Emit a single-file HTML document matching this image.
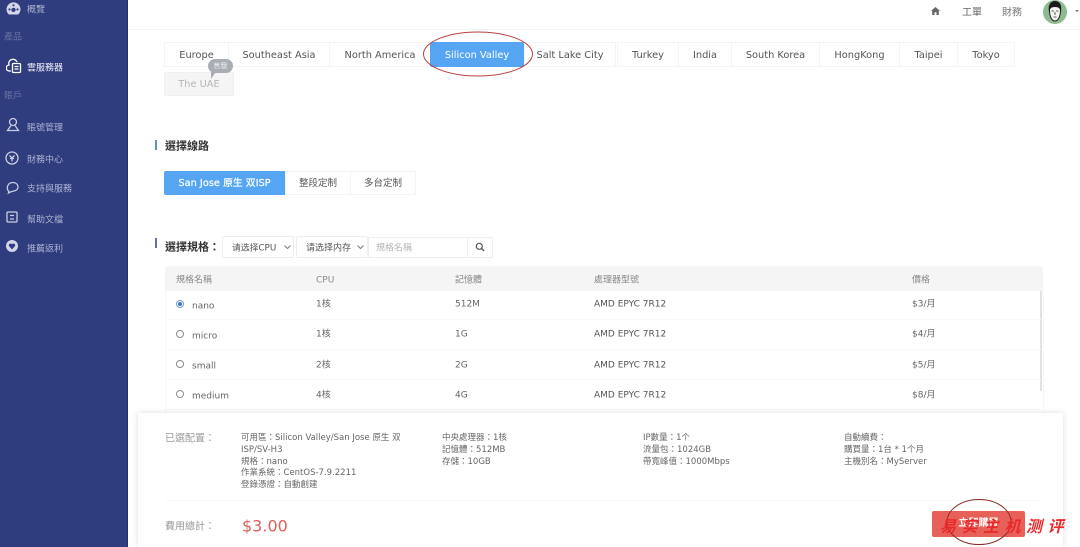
<!DOCTYPE html>
<html lang="zh-Hant">
<head>
<meta charset="utf-8">
<style>
html,body{margin:0;padding:0;width:1080px;height:547px;overflow:hidden;background:#fff}
body{position:relative;font-family:"DejaVu Sans","Noto Sans CJK TC",sans-serif;font-size:9px;color:#666}
.a,.t,.tab{position:absolute;white-space:nowrap}
.t{line-height:12px;transform:translateY(-4.5px)}
#side{position:absolute;left:0;top:0;width:127px;height:547px;background:#2f3c7e;border-right:1px solid #263266}
.nav{color:#aeb4d2;font-size:9px}
.grp{color:#6a74a6;font-size:9px}
.ic{position:absolute;left:5px;width:16px;height:16px;fill:none;stroke:#c9cde3;stroke-width:1.3}
.tab{top:42px;height:25px;line-height:25px;box-sizing:border-box;border:1px solid #f4f4f4;text-align:center;color:#555;font-size:9.8px;background:#fff}
.ln{position:absolute;left:166px;width:875px;height:1px;background:#f9f9f9}
.c{color:#666}
.g{color:#888}
.r{position:absolute;left:176px;width:6px;height:6px;border:1px solid #8a8a8a;border-radius:50%}
.sm{line-height:11.8px;font-size:8.5px;color:#666;position:absolute;white-space:nowrap}
</style>
</head>
<body>
<div style="position:absolute;left:128px;top:29px;width:952px;height:1px;background:#f4f4f4"></div>

<div id="side">
<svg class="ic" style="top:2px;left:6px;width:15px;height:13px" viewBox="0 0 16 14"><path d="M3 13.500A7.500 7.500 0 1 1 13 13.500z" fill="#d3d6e8" stroke="none"/><circle cx="8" cy="8.500" r="2.300" fill="#2f3c7e" stroke="none"/><circle cx="3.700" cy="8" r="1.200" fill="#2f3c7e" stroke="none"/><circle cx="12.300" cy="8" r="1.200" fill="#2f3c7e" stroke="none"/><circle cx="8" cy="3.500" r="1.100" fill="#2f3c7e" stroke="none"/></svg>
<div class="t nav" style="left:27px;top:9px">概覽</div>
<div class="t grp" style="left:4px;top:36px">產品</div>
<svg class="ic" style="top:58px;left:6px;stroke:#fff" viewBox="0 0 16 16"><path d="M5 13H3.500a3 3 0 0 1-.500-6A4 4 0 0 1 11 4"/><rect x="6.500" y="5.500" width="8" height="9" rx="1"/><path d="M8.500 8.500h4M8.500 11h4"/></svg>
<div class="t" style="left:27px;top:67px;color:#f2f3f9;font-size:9px">雲服務器</div>
<div class="t grp" style="left:4px;top:95px">賬戶</div>
<svg class="ic" style="top:117px" viewBox="0 0 16 16"><circle cx="8" cy="5" r="3.500"/><path d="M6 8.500 2.500 13.500h11L10 8.500"/></svg>
<div class="t nav" style="left:27px;top:127px">賬號管理</div>
<svg class="ic" style="top:150px;left:4px" viewBox="0 0 16 16"><circle cx="8" cy="8" r="6"/><path d="M5.500 5.500 8 8l2.500-2.500M8 8v3.500M6 8.500h4"/></svg>
<div class="t nav" style="left:27px;top:159px">財務中心</div>
<svg class="ic" style="top:179px" viewBox="0 0 16 16"><path d="M4 12.500C1 10 2 3.500 8 3.500s7 7.500 1 8.500c-2 .3-3 .5-5.500 2z"/></svg>
<div class="t nav" style="left:27px;top:188px">支持與服務</div>
<svg class="ic" style="top:209px;left:4px" viewBox="0 0 16 16"><rect x="3" y="3" width="10" height="10" rx="1"/><path d="M6 6.500h4M6 10h4"/></svg>
<div class="t nav" style="left:27px;top:219px">幫助文檔</div>
<svg class="ic" style="top:238px;left:4px" viewBox="0 0 16 16"><circle cx="8" cy="8" r="6" fill="#d3d6e8" stroke="none"/><path d="M8 11.500 5.200 8.300a1.700 1.700 0 0 1 2.800-2 1.700 1.700 0 0 1 2.800 2z" fill="#2f3c7e" stroke="none"/></svg>
<div class="t nav" style="left:27px;top:248px">推薦返利</div>
</div>

<!-- header -->
<svg class="a" style="left:931px;top:7px;width:9px;height:8px" viewBox="0 0 9 8"><path d="M4.500 0 0 4h1.200v4h2.300V5.300h2V8h2.300V4H9z" fill="#666"/></svg>
<div class="t" style="left:962px;top:12px;font-size:10px;color:#666">工單</div>
<div class="t" style="left:1002px;top:12px;font-size:10px;color:#777">財務</div>
<svg class="a" style="left:1043px;top:0;width:24px;height:24px" viewBox="0 0 24 24"><circle cx="12" cy="12" r="12" fill="#8dbb8f"/><path d="M6.500 10C6 3 18 3 17.500 10c0 6-2 11-5.500 11s-5.500-5-5.500-11z" fill="#f4f4f0" stroke="#222"/><path d="M6 12C4.500 3 9 1 12 1s7.500 2 6 11c-1-3-1.500-5-6-5s-5 2-6 5z" fill="#1c1c1c"/><path d="M8.500 11h2.500M13 11h2.500M12 12v3M10.500 17h3" stroke="#333" stroke-width=".8"/></svg>
<div class="a" style="left:1075px;top:10px;border:2px solid transparent;border-top:2px solid #777;"></div>

<!-- region tabs -->
<div class="tab" style="left:164px;width:65px">Europe</div>
<div class="tab" style="left:228px;width:102px">Southeast Asia</div>
<div class="tab" style="left:329px;width:102px">North America</div>
<div class="tab" style="left:430px;width:94px;background:#56a5f3;border-color:#56a5f3;color:#fff;border-radius:2px">Silicon Valley</div>
<div class="tab" style="left:524px;width:92px">Salt Lake City</div>
<div class="tab" style="left:617px;width:62px">Turkey</div>
<div class="tab" style="left:678px;width:54px">India</div>
<div class="tab" style="left:731px;width:89px">South Korea</div>
<div class="tab" style="left:819px;width:81px">HongKong</div>
<div class="tab" style="left:899px;width:59px">Taipei</div>
<div class="tab" style="left:957px;width:58px">Tokyo</div>
<div class="tab" style="left:164px;top:72px;width:70px;height:24px;line-height:24px;background:#f5f5f5;color:#b5b5b5;border-color:#f0f0f0">The UAE</div>
<div class="a" style="left:208px;top:59px;width:25px;height:14px;background:#a9aeb4;border-radius:7px;color:#eee;font-size:7px;line-height:14px;text-align:center">售罄</div>
<div class="a" style="left:211px;top:72px;border:3px solid transparent;border-top:4px solid #a9aeb4;border-left:2px solid #a9aeb4"></div>

<!-- lines -->
<div class="a" style="left:155px;top:140px;width:2px;height:10px;background:#5f93c7"></div>
<div class="t" style="left:165px;top:144.500px;font-size:11px;font-weight:bold;color:#333">選擇線路</div>
<div class="tab" style="left:164px;top:171px;width:121px;height:24px;line-height:23px;background:#56a5f3;border-color:#56a5f3;color:#fff;border-radius:2px 0 0 2px;font-size:9.800px;-webkit-text-stroke:.2px #fff">San Jose 原生 双ISP</div>
<div class="tab" style="left:285px;top:171px;width:66px;height:24px;line-height:23px;font-size:9.500px">整段定制</div>
<div class="tab" style="left:350px;top:171px;width:66px;height:24px;line-height:23px;font-size:9.500px">多台定制</div>

<!-- filters -->
<div class="a" style="left:155px;top:238px;width:2px;height:10px;background:#5f6fb5"></div>
<div class="t" style="left:165px;top:245.500px;font-size:11px;font-weight:bold;color:#333">選擇規格：</div>
<div class="a" style="left:222px;top:236px;width:72px;height:22px;border:1px solid #eee;box-sizing:border-box;border-radius:2px"></div>
<div class="t" style="left:232px;top:247px;color:#555;font-size:8.800px">请选择CPU</div>
<svg class="a" style="left:284px;top:245px;width:7px;height:4px" viewBox="0 0 7 4"><path d="M.5.500 3.500 3.500 6.500.500" fill="none" stroke="#777"/></svg>
<div class="a" style="left:296px;top:236px;width:72px;height:22px;border:1px solid #eee;box-sizing:border-box;border-radius:2px"></div>
<div class="t" style="left:306px;top:247px;color:#555">请选择内存</div>
<svg class="a" style="left:357px;top:245px;width:7px;height:4px" viewBox="0 0 7 4"><path d="M.5.500 3.500 3.500 6.500.500" fill="none" stroke="#777"/></svg>
<div class="a" style="left:368px;top:237px;width:100px;height:21px;border:1px solid #eee;box-sizing:border-box"></div>
<div class="t" style="left:376px;top:247px;color:#b5b5b5">規格名稱</div>
<div class="a" style="left:467px;top:237px;width:26px;height:21px;border:1px solid #eee;box-sizing:border-box"></div>
<svg class="a" style="left:475px;top:242px;width:10px;height:10px" viewBox="0 0 10 10"><circle cx="4.300" cy="4.300" r="3" fill="none" stroke="#555" stroke-width="1.200"/><path d="M6.500 6.500 9 9" stroke="#555" stroke-width="1.300"/></svg>

<!-- table -->
<div class="a" style="left:165px;top:266px;width:878px;height:25px;background:#f5f5f5;border-radius:3px 3px 0 0"></div>
<div class="a" style="left:165px;top:291px;width:1px;height:122px;background:#f8f8f8"></div>
<div class="a" style="left:1043px;top:291px;width:1px;height:122px;background:#f8f8f8"></div>
<div class="a" style="left:1040px;top:291px;width:2px;height:100px;background:#e2e2e2"></div>
<div class="t g" style="left:176px;top:279px">規格名稱</div>
<div class="t g" style="left:316px;top:279px">CPU</div>
<div class="t g" style="left:455px;top:279px">記憶體</div>
<div class="t g" style="left:594px;top:279px">處理器型號</div>
<div class="t g" style="left:912px;top:279px">價格</div>
<div class="ln" style="top:319px"></div>
<div class="ln" style="top:349px"></div>
<div class="ln" style="top:379px"></div>
<div class="ln" style="top:409px"></div>

<div class="r" style="top:300px;border-color:#6d9ccf"></div>
<div class="a" style="left:178px;top:302px;width:4px;height:4px;background:#3f78b8;border-radius:50%"></div>
<div class="t c" style="left:192px;top:305px">nano</div>
<div class="t c" style="left:316px;top:303px">1核</div>
<div class="t c" style="left:455px;top:303px">512M</div>
<div class="t c" style="left:594px;top:303px;color:#555">AMD EPYC 7R12</div>
<div class="t c" style="left:912px;top:303px">$3/月</div>

<div class="r" style="top:330px"></div>
<div class="t c" style="left:192px;top:335px">micro</div>
<div class="t c" style="left:316px;top:333px">1核</div>
<div class="t c" style="left:455px;top:333px">1G</div>
<div class="t c" style="left:594px;top:333px;color:#555">AMD EPYC 7R12</div>
<div class="t c" style="left:912px;top:333px">$4/月</div>

<div class="r" style="top:360px"></div>
<div class="t c" style="left:192px;top:365px">small</div>
<div class="t c" style="left:316px;top:363.500px">2核</div>
<div class="t c" style="left:455px;top:363.500px">2G</div>
<div class="t c" style="left:594px;top:363.500px;color:#555">AMD EPYC 7R12</div>
<div class="t c" style="left:912px;top:363.500px">$5/月</div>

<div class="r" style="top:390px"></div>
<div class="t c" style="left:192px;top:395px">medium</div>
<div class="t c" style="left:316px;top:393.500px">4核</div>
<div class="t c" style="left:455px;top:393.500px">4G</div>
<div class="t c" style="left:594px;top:393.500px;color:#555">AMD EPYC 7R12</div>
<div class="t c" style="left:912px;top:393.500px">$8/月</div>

<!-- bottom panel -->
<div class="a" style="left:138px;top:413px;width:925px;height:134px;background:#fff;box-shadow:0 0 6px rgba(0,0,0,.13)"></div>
<div class="t" style="left:165px;top:438px;color:#999;font-size:10px">已選配置：</div>
<div class="sm" style="left:241px;top:433px">可用區：Silicon Valley/San Jose 原生 双<br>ISP/SV-H3<br>規格：nano<br>作業系統：CentOS-7.9.2211<br>登錄憑證：自動創建</div>
<div class="sm" style="left:442px;top:433px">中央處理器：1核<br>記憶體：512MB<br>存儲：10GB</div>
<div class="sm" style="left:643px;top:433px">IP數量：1个<br>流量包：1024GB<br>帶寬峰值：1000Mbps</div>
<div class="sm" style="left:844px;top:433px">自動續費：<br>購買量：1台 * 1个月<br>主機別名：MyServer</div>
<div class="a" style="left:165px;top:500px;width:875px;height:1px;background:#f7f7f7"></div>
<div class="t" style="left:165px;top:526px;color:#999;font-size:10px">費用總計：</div>
<div class="t" style="left:242px;top:524.500px;color:#d9605c;font-size:16px">$3.00</div>
<div class="a" style="left:932px;top:511px;width:93px;height:26px;background:#e8605a;border-radius:2px;color:#fff;font-size:10px;font-weight:bold;text-align:center;line-height:26px">立即購買</div>

<!-- annotations -->
<svg class="a" style="left:0;top:0;width:1080px;height:547px;pointer-events:none" viewBox="0 0 1080 547">
<ellipse cx="478" cy="54" rx="54.500" ry="22" fill="none" stroke="#b8413f" stroke-width="1"/>
<ellipse cx="979" cy="522" rx="32" ry="22.500" fill="none" stroke="#8a2a2a" stroke-width="1"/>
</svg>
<div class="a" style="left:940px;top:518px;font-size:16px;line-height:20px;font-style:italic;font-weight:bold;color:#ea2a2a;letter-spacing:5.500px;font-family:'Liberation Sans','Noto Sans CJK SC',sans-serif">易实主机测评</div>
</body>
</html>
